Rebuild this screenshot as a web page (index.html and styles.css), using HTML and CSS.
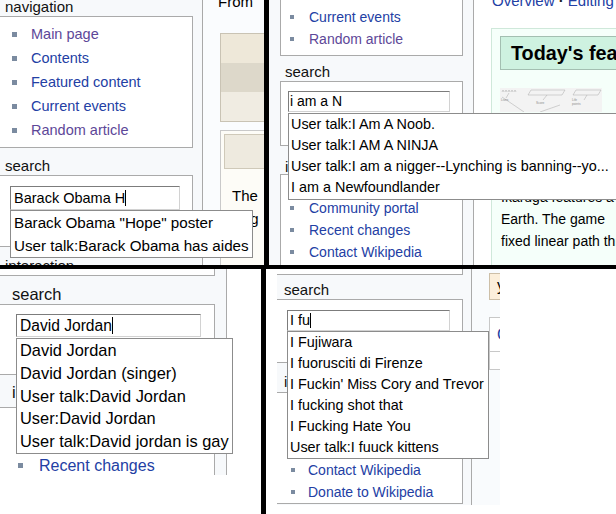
FILE: index.html
```html
<!DOCTYPE html>
<html>
<head>
<meta charset="utf-8">
<title>Search suggestions</title>
<link rel="stylesheet" href="styles.css">
</head>
<body>
<div class="collage">
  <div class="row">
    <section class="shot tl">
      <div class="side">
        <div class="ph">navigation</div>
        <div class="pbox nav">
          <ul class="links">
            <li class="vis">Main page</li>
            <li>Contents</li>
            <li>Featured content</li>
            <li>Current events</li>
            <li class="vis">Random article</li>
          </ul>
        </div>
        <div class="ph ph-search">search</div>
        <div class="pbox sbox">
          <div class="input">Barack Obama H<span class="caret"></span>
            <ul class="sugg">
              <li>Barack Obama "Hope" poster</li>
              <li>User talk:Barack Obama has aides</li>
            </ul>
          </div>
        </div>
        <div class="ph ph-inter">interaction</div>
      </div>
      <div class="content">
        <div class="from">From</div>
        <div class="bx1">
          <div class="r1"></div>
          <div class="r2"></div>
          <div class="r3"></div>
        </div>
        <div class="bx2">
          <div class="hd"></div>
          <p>The<br>Ang<br>Ja,</p>
        </div>
      </div>
    </section>
    <div class="vbar vbar-top"></div>
    <section class="shot tr">
      <div class="side">
        <div class="pbox nav">
          <ul class="links">
            <li>Featured content</li>
            <li>Current events</li>
            <li class="vis">Random article</li>
          </ul>
        </div>
        <div class="ph ph-search">search</div>
        <div class="pbox sbox">
          <div class="input">i am a N
            <ul class="sugg">
              <li>User talk:I Am A Noob.</li>
              <li>User talk:I AM A NINJA</li>
              <li>User talk:I am a nigger--Lynching is banning--yo...</li>
              <li>I am a Newfoundlander</li>
            </ul>
          </div>
        </div>
        <div class="ph ph-inter">interaction</div>
        <div class="pbox inter">
          <ul class="links">
            <li>About Wikipedia</li>
            <li>Community portal</li>
            <li>Recent changes</li>
            <li>Contact Wikipedia</li>
            <li>Donate to Wikipedia</li>
          </ul>
        </div>
      </div>
      <div class="content">
        <div class="toplinks">Overview <b class="dot">·</b> Editing <b class="dot">·</b> Questions <b class="dot">·</b> Help</div>
        <div class="tfa">
          <div class="hd">Today's featured article</div>
          <svg class="pic" viewBox="0 0 102 24" width="102" height="24">
            <g stroke="#a8a8a8" fill="none" stroke-width="0.5">
              <path d="M2 4l1-2 1 2M5 4l1-2 1 2M8 4l1-2 1 2M11 4l1-2 1 2M14 4l1-2 1 2"/>
              <path d="M9 5L6 10"/>
              <path d="M31 2h34l-3 5H28z"/>
              <path d="M47 7l-4 5"/>
              <path d="M76 2h25l-3 5H73z"/>
              <path d="M87 7l-3 5"/>
              <path d="M2 9L24 24M40 24L60 17"/>
            </g>
            <g font-size="3.2" fill="#8a8a8a" font-family="Liberation Sans, sans-serif">
              <text x="1" y="13">Lives</text>
              <text x="36" y="16">Score</text>
              <text x="72" y="13">Life</text>
              <text x="72" y="17">points</text>
            </g>
          </svg>
          <p>Ikaruga is a vertically scrolling<br>shoot 'em up developed by<br>Treasure. The game's story<br>Ikaruga features a<br>Earth. The game<br>fixed linear path through</p>
        </div>
      </div>
    </section>
  </div>
  <div class="hbar"></div>
  <div class="row">
    <section class="shot bl">
      <div class="page">
        <div class="side">
          <div class="pbox stub"></div>
          <div class="ph ph-search">search</div>
          <div class="pbox sbox">
            <div class="input">David Jordan<span class="caret"></span>
              <ul class="sugg">
                <li>David Jordan</li>
                <li>David Jordan (singer)</li>
                <li>User talk:David Jordan</li>
                <li>User:David Jordan</li>
                <li>User talk:David jordan is gay</li>
              </ul>
            </div>
          </div>
          <div class="ph ph-inter">interaction</div>
          <div class="pbox inter">
            <ul class="links">
              <li>About Wikipedia</li>
              <li>Community portal</li>
              <li>Recent changes</li>
              <li>Contact Wikipedia</li>
            </ul>
          </div>
        </div>
        <div class="content"></div>
      </div>
    </section>
    <div class="vbar vbar-bottom"></div>
    <section class="shot br">
      <div class="page">
        <div class="side">
          <div class="pbox stub"></div>
          <div class="ph ph-search">search</div>
          <div class="pbox sbox">
            <div class="input">I fu<span class="caret"></span>
              <ul class="sugg">
                <li>I Fujiwara</li>
                <li>I fuorusciti di Firenze</li>
                <li>I Fuckin' Miss Cory and Trevor</li>
                <li>I fucking shot that</li>
                <li>I Fucking Hate You</li>
                <li>User talk:I fuuck kittens</li>
              </ul>
            </div>
          </div>
          <div class="ph ph-inter">interaction</div>
          <div class="pbox inter">
            <ul class="links">
              <li>About Wikipedia</li>
              <li>Community portal</li>
              <li>Recent changes</li>
              <li>Contact Wikipedia</li>
              <li>Donate to Wikipedia</li>
            </ul>
          </div>
        </div>
        <div class="content">
          <div class="ybox">y</div>
          <div class="cbox"><div class="hd">C</div></div>
        </div>
      </div>
    </section>
  </div>
</div>
</body>
</html>
```

FILE: styles.css
```css
* { box-sizing: border-box; margin: 0; padding: 0; }
html, body { width: 616px; height: 514px; overflow: hidden; background: #fff; }
body { font-family: "Liberation Sans", Arial, sans-serif; color: #000; }
ul { list-style: none; }

.collage { display: grid; grid-template-rows: 265px 4px 245px; width: 616px; height: 514px; }
.row { display: flex; min-height: 0; }
.hbar { background: #000; }
.vbar { background: #000; flex: none; width: 5px; }
.shot { position: relative; overflow: hidden; flex: none; }
.tl { width: 264px; }
.tr { flex: 1; }
.bl { width: 261px; }
.br { flex: 1; }

/* shared sidebar pieces */
.ph { white-space: nowrap; color: #111; }
.pbox { background: #fff; border: 1px solid #aaa; }
.links li { display: flex; align-items: center; white-space: nowrap; color: #2340a4; }
.links li::before { content: ""; flex: none; background: #7b8ba0; }
.links li.vis { color: #5d4798; }
.input { position: relative; background: #fff; border: 1px solid; border-color: #7c7c7c #d2d2d2 #d2d2d2 #7c7c7c; white-space: nowrap; }
.caret { display: inline-block; width: 1px; background: #000; vertical-align: -3px; }
.sugg { position: absolute; left: -1px; z-index: 2; background: #fff; border: 1px solid #8c8c8c; white-space: nowrap; overflow: hidden; color: #000; }

/* top left */
.tl { display: flex; align-items: flex-start; background: #f7f9fb; }
.tl .side { width: 193px; flex: none; }
.tl .ph { font-size: 15px; line-height: 14px; height: 16px; padding: 0 0 2px 5px; }
.tl .ph-search { margin-top: 11px; }
.tl .ph-inter { margin-top: 12px; }
.tl .pbox { border-left: none; }
.tl .links { padding: 5px 0; font-size: 14.5px; line-height: 24px; }
.tl .links li::before { width: 5px; height: 5px; margin: 0 14px 0 12px; }
.tl .sbox { height: 72px; padding: 10px 0 0 10px; }
.tl .input { width: 170px; height: 24px; font-size: 14.5px; line-height: 22px; padding-left: 3px; }
.tl .caret { height: 16px; }
.tl .sugg { top: calc(100% + 1px); width: 243px; font-size: 15.2px; line-height: 23px; padding-left: 3px; }
.tl .content { flex: 1; align-self: stretch; margin-left: 9px; border-left: 1px solid #a9a9a9; background: #fafcfe; }
.tl .from { margin: -7px 0 0 15px; font-size: 15px; line-height: 18px; white-space: nowrap; }
.tl .bx1 { margin: 22px 0 0 17px; border: 1px solid #c9c3b4; border-right: none; }
.tl .bx1 div { height: 29px; }
.tl .r1 { background: #eee8d9; }
.tl .r2 { background: #ddd8ca; }
.tl .r3 { background: #f0ece2; }
.tl .bx2 { margin: 8px 0 0 17px; height: 200px; padding: 3px 0 0 3px; border: 1px solid #c9c9c9; border-right: none; background: #fdfcf7; }
.tl .bx2 .hd { height: 35px; background: #eeeadf; border: 1px solid #cfc9b9; border-right: none; }
.tl .bx2 p { margin: 15px 0 0 8px; font-size: 15px; line-height: 23px; white-space: nowrap; }

/* top right */
.tr { display: flex; align-items: flex-start; background: #f7f9fb; }
.tr .side { width: 183px; flex: none; margin: -22px 0 0 11px; }
.tr .links { font-size: 14px; line-height: 22px; }
.tr .links li::before { width: 4px; height: 4px; margin: 0 15px 0 9px; }
.tr .nav { padding: 5px 0; }
.tr .ph { font-size: 15px; line-height: 14px; height: 16px; padding: 0 0 2px 5px; }
.tr .ph-search { margin-top: 9px; }
.tr .sbox { height: 65px; padding: 9px 0 0 7px; }
.tr .input { width: 162px; height: 21px; font-size: 14px; line-height: 19px; padding-left: 1px; }
.tr .sugg { top: calc(100% + 2px); width: 340px; padding: 0 0 1px 2px; font-size: 14.4px; line-height: 21px; }
.tr .ph-inter { margin-top: 14px; height: 14px; padding-bottom: 0; }
.tr .content { flex: 1; align-self: stretch; margin-left: 10px; border-left: 1px solid #aaa; background: #fff; }
.tr .toplinks { margin: -8px 0 0 18px; font-size: 15px; line-height: 18px; white-space: nowrap; color: #2340a4; }
.tr .dot { color: #222; }
.tr .tfa { margin: 18px 0 0 17px; height: 300px; padding: 7px 0 0 8px; background: #f5fffa; border: 1px solid #cfe8da; border-right: none; }
.tr .tfa .hd { height: 34px; padding-left: 10px; background: #cef2e0; border: 1px solid #a3bfb1; border-right: none; font-weight: bold; font-size: 19.8px; line-height: 32px; white-space: nowrap; }
.tr .pic { display: block; margin-top: 18px; background: #f3f3f3; }
.tr .tfa p { margin: 8px 0 0 1px; font-size: 14px; line-height: 22px; white-space: nowrap; }

/* bottom left */
.bl { background: #fff; }
.bl .page { display: flex; align-items: flex-start; height: 206px; overflow: hidden; background: #f7f9fb; }
.bl .side { width: 215px; flex: none; }
.bl .pbox { border-left: none; }
.bl .stub { height: 7px; border-top: none; }
.bl .ph { font-size: 16.5px; line-height: 16px; height: 18px; padding: 0 0 2px 12px; }
.bl .ph-search { margin-top: 10px; }
.bl .sbox { height: 71px; padding: 9px 0 0 16px; }
.bl .input { width: 185px; height: 23px; font-size: 15.6px; line-height: 21px; padding-left: 3px; }
.bl .caret { height: 17px; }
.bl .sugg { top: calc(100% + 2px); width: 217px; font-size: 16.4px; line-height: 22.8px; padding-left: 3px; }
.bl .ph-inter { margin-top: 9px; height: 23px; padding-bottom: 7px; }
.bl .links { font-size: 16px; line-height: 23px; }
.bl .links li::before { width: 5px; height: 5px; margin: 0 16px 0 18px; }
.bl .content { flex: 1; align-self: stretch; margin-left: 11px; border-left: 1px solid #aaa; background: #fff; }

/* bottom right */
.br { background: #fff; padding-left: 11px; }
.br .page { display: flex; align-items: flex-start; width: 223px; height: 236px; overflow: hidden; background: #f7f9fb; }
.br .side { width: 186px; flex: none; }
.br .pbox { border-left: none; }
.br .stub { height: 6px; border-top: none; }
.br .ph { font-size: 15px; line-height: 14px; height: 16px; padding: 0 0 2px 7px; }
.br .ph-search { margin-top: 8px; }
.br .sbox { height: 64px; padding: 10px 0 0 10px; }
.br .input { width: 163px; height: 21px; font-size: 14.5px; line-height: 19px; padding-left: 2px; }
.br .caret { height: 15px; }
.br .sugg { top: calc(100% + 1px); width: 202px; font-size: 14.4px; line-height: 21px; padding-left: 2px; }
.br .ph-inter { margin-top: 12px; height: 17px; padding-bottom: 3px; }
.br .links { font-size: 14px; line-height: 22px; }
.br .links li::before { width: 4px; height: 4px; margin: 0 13px 0 14px; }
.br .content { flex: 1; align-self: stretch; margin-left: 8px; border-left: 1px solid #aaa; background: #f9fbfd; }
.br .ybox { margin: 4px 0 0 17px; height: 27px; padding-left: 7px; background: #fcefdb; border: 1px solid #cdbfa8; border-right: none; font-size: 16px; line-height: 24px; }
.br .cbox { margin: 17px 0 0 17px; height: 53px; background: #fff; border: 1px solid #c8c8c8; border-right: none; }
.br .cbox .hd { height: 34px; padding-left: 7px; border-bottom: 1px solid #c8c8c8; font-size: 16px; line-height: 33px; color: #2340a4; }
```
